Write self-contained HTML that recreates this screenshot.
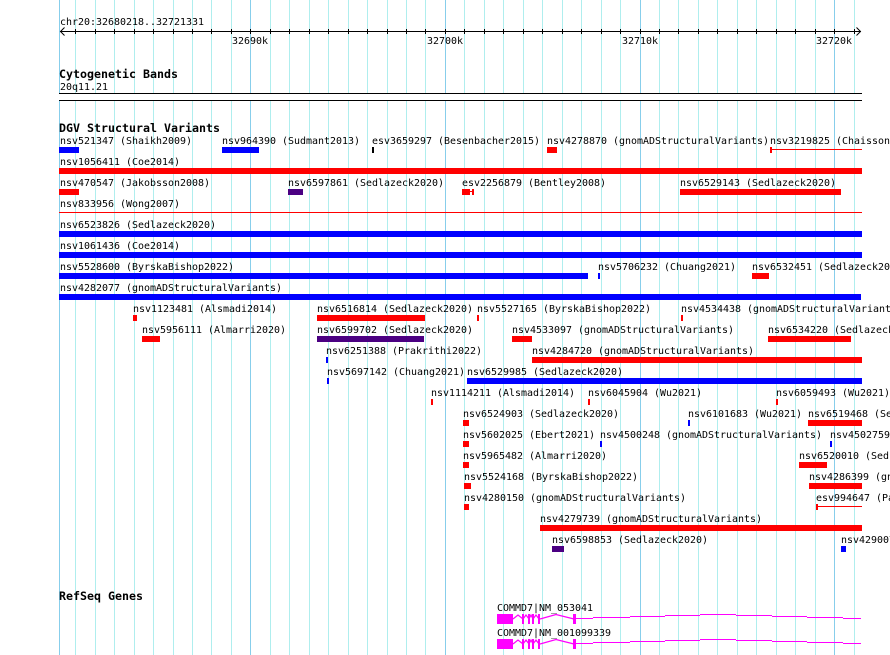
<!DOCTYPE html>
<html><head><meta charset="utf-8"><style>
html,body{margin:0;padding:0;background:#fff;overflow:hidden}
svg{display:block}
text{font-family:"DejaVu Sans Mono","Liberation Mono",monospace;font-size:9.97px;fill:#000;white-space:pre}
text.b{font-weight:bold;font-size:11.63px}
.r{fill:#f00}.u{fill:#00f}.p{fill:#4b0082}.m{fill:#f0f}
</style></head><body>
<svg width="890" height="655" viewBox="0 0 890 655" xmlns="http://www.w3.org/2000/svg">
<g shape-rendering="crispEdges">
<path stroke="#afeeee" stroke-width="1" fill="none" d="M75.5 0V655M95.5 0V655M114.5 0V655M134.5 0V655M153.5 0V655M173.5 0V655M192.5 0V655M211.5 0V655M231.5 0V655M270.5 0V655M289.5 0V655M309.5 0V655M328.5 0V655M348.5 0V655M367.5 0V655M387.5 0V655M406.5 0V655M425.5 0V655M464.5 0V655M484.5 0V655M503.5 0V655M523.5 0V655M542.5 0V655M562.5 0V655M581.5 0V655M601.5 0V655M620.5 0V655M659.5 0V655M678.5 0V655M698.5 0V655M717.5 0V655M737.5 0V655M756.5 0V655M776.5 0V655M795.5 0V655M815.5 0V655M854.5 0V655"/>
<path stroke="#87ceeb" stroke-width="1" fill="none" d="M59.5 0V655M250.5 0V655M445.5 0V655M640.5 0V655M834.5 0V655"/>
<rect x="0" y="93" width="890" height="8" fill="#fff"/>
<rect x="59" y="93" width="803" height="1" fill="#000"/>
<rect x="59" y="100" width="803" height="1" fill="#000"/>
<rect x="60" y="31" width="801" height="1" fill="#000"/>
<path stroke="#000" stroke-width="1" fill="none" d="M75.5 29V34M95.5 29V34M114.5 29V34M134.5 29V34M153.5 29V34M173.5 29V34M192.5 29V34M211.5 29V34M231.5 29V34M250.5 29V34M270.5 29V34M289.5 29V34M309.5 29V34M328.5 29V34M348.5 29V34M367.5 29V34M387.5 29V34M406.5 29V34M425.5 29V34M445.5 29V34M464.5 29V34M484.5 29V34M503.5 29V34M523.5 29V34M542.5 29V34M562.5 29V34M581.5 29V34M601.5 29V34M620.5 29V34M640.5 29V34M659.5 29V34M678.5 29V34M698.5 29V34M717.5 29V34M737.5 29V34M756.5 29V34M776.5 29V34M795.5 29V34M815.5 29V34M834.5 29V34M854.5 29V34"/>
</g>
<path stroke="#000" stroke-width="1" fill="none" d="M64.5 27.5L60.5 31.5L64.5 35.5M856.5 27.5L860.5 31.5L856.5 35.5"/>

<g shape-rendering="crispEdges">
<rect class="u" x="59" y="147" width="20" height="6"/>
<rect class="u" x="222" y="147" width="37" height="6"/>
<rect x="372" y="147" width="2" height="6" fill="#000"/>
<rect class="r" x="547" y="147" width="10" height="6"/>
<rect class="r" x="770" y="147" width="2" height="6"/>
<rect class="r" x="770" y="149" width="92" height="1"/>
<rect class="r" x="59" y="168" width="803" height="6"/>
<rect class="r" x="59" y="189" width="20" height="6"/>
<rect class="p" x="288" y="189" width="15" height="6"/>
<rect class="r" x="462" y="189" width="8" height="6"/>
<rect class="r" x="470" y="191" width="3" height="1"/>
<rect class="r" x="472" y="189" width="2" height="6"/>
<rect class="r" x="680" y="189" width="161" height="6"/>
<rect class="r" x="59" y="212" width="803" height="1"/>
<rect class="u" x="59" y="231" width="803" height="6"/>
<rect class="u" x="59" y="252" width="803" height="6"/>
<rect class="u" x="59" y="273" width="529" height="6"/>
<rect class="u" x="598" y="273" width="2" height="6"/>
<rect class="r" x="752" y="273" width="17" height="6"/>
<rect class="u" x="59" y="294" width="802" height="6"/>
<rect class="r" x="133" y="315" width="4" height="6"/>
<rect class="r" x="317" y="315" width="108" height="6"/>
<rect class="r" x="477" y="315" width="2" height="6"/>
<rect class="r" x="681" y="315" width="2" height="6"/>
<rect class="r" x="142" y="336" width="18" height="6"/>
<rect class="p" x="317" y="336" width="107" height="6"/>
<rect class="r" x="512" y="336" width="20" height="6"/>
<rect class="r" x="768" y="336" width="83" height="6"/>
<rect class="u" x="326" y="357" width="2" height="6"/>
<rect class="r" x="532" y="357" width="330" height="6"/>
<rect class="u" x="327" y="378" width="2" height="6"/>
<rect class="u" x="467" y="378" width="395" height="6"/>
<rect class="r" x="431" y="399" width="2" height="6"/>
<rect class="r" x="588" y="399" width="2" height="6"/>
<rect class="r" x="776" y="399" width="2" height="6"/>
<rect class="r" x="463" y="420" width="6" height="6"/>
<rect class="u" x="688" y="420" width="2" height="6"/>
<rect class="r" x="808" y="420" width="54" height="6"/>
<rect class="r" x="463" y="441" width="6" height="6"/>
<rect class="u" x="600" y="441" width="2" height="6"/>
<rect class="u" x="830" y="441" width="2" height="6"/>
<rect class="r" x="463" y="462" width="6" height="6"/>
<rect class="r" x="799" y="462" width="28" height="6"/>
<rect class="r" x="464" y="483" width="7" height="6"/>
<rect class="r" x="809" y="483" width="53" height="6"/>
<rect class="r" x="464" y="504" width="5" height="6"/>
<rect class="r" x="816" y="504" width="2" height="6"/>
<rect class="r" x="816" y="506" width="46" height="1"/>
<rect class="r" x="540" y="525" width="322" height="6"/>
<rect class="p" x="552" y="546" width="12" height="6"/>
<rect class="u" x="841" y="546" width="5" height="6"/>

<g class="m">
<rect x="497" y="614" width="16" height="10"/>
<rect x="522" y="614" width="2" height="10"/><rect x="528" y="614" width="2" height="10"/><rect x="532" y="614" width="2" height="10"/><rect x="538" y="614" width="2" height="10"/>
<rect x="573" y="614" width="3" height="10"/>
<rect x="576" y="618" width="17" height="1"/><rect x="593" y="617" width="37" height="1"/><rect x="630" y="616" width="35" height="1"/><rect x="665" y="615" width="35" height="1"/><rect x="700" y="614" width="36" height="1"/><rect x="736" y="615" width="36" height="1"/><rect x="772" y="616" width="35" height="1"/><rect x="807" y="617" width="36" height="1"/><rect x="843" y="618" width="18" height="1"/>
<rect x="497" y="639" width="16" height="10"/>
<rect x="522" y="639" width="2" height="10"/><rect x="528" y="639" width="2" height="10"/><rect x="532" y="639" width="2" height="10"/><rect x="538" y="639" width="2" height="10"/>
<rect x="573" y="639" width="3" height="10"/>
<rect x="576" y="643" width="17" height="1"/><rect x="593" y="642" width="37" height="1"/><rect x="630" y="641" width="35" height="1"/><rect x="665" y="640" width="35" height="1"/><rect x="700" y="639" width="36" height="1"/><rect x="736" y="640" width="36" height="1"/><rect x="772" y="641" width="35" height="1"/><rect x="807" y="642" width="36" height="1"/><rect x="843" y="643" width="18" height="1"/>
</g>
</g>
<path stroke="#f0f" stroke-width="1.2" fill="none" d="M513 619L518 615L523 619L526 615L529 619L531 615L533 619L536 615L539 619M540 619L556 614.5L574 619M513 644L518 640L523 644L526 640L529 644L531 640L533 644L536 640L539 644M540 644L556 639.5L574 644"/>

<text x="60" y="25">chr20:32680218..32721331</text>
<text x="232" y="44">32690k</text><text x="427" y="44">32700k</text><text x="622" y="44">32710k</text><text x="816" y="44">32720k</text>
<text class="b" x="59" y="78">Cytogenetic Bands</text>
<text x="60" y="90">20q11.21</text>
<text class="b" x="59" y="132">DGV Structural Variants</text>

<text x="60" y="144">nsv521347 (Shaikh2009)</text>
<text x="222" y="144">nsv964390 (Sudmant2013)</text>
<text x="372" y="144">esv3659297 (Besenbacher2015)</text>
<text x="547" y="144">nsv4278870 (gnomADStructuralVariants)</text>
<text x="770" y="144">nsv3219825 (Chaisson</text>
<text x="60" y="165">nsv1056411 (Coe2014)</text>
<text x="60" y="186">nsv470547 (Jakobsson2008)</text>
<text x="288" y="186">nsv6597861 (Sedlazeck2020)</text>
<text x="462" y="186">esv2256879 (Bentley2008)</text>
<text x="680" y="186">nsv6529143 (Sedlazeck2020)</text>
<text x="60" y="207">nsv833956 (Wong2007)</text>
<text x="60" y="228">nsv6523826 (Sedlazeck2020)</text>
<text x="60" y="249">nsv1061436 (Coe2014)</text>
<text x="60" y="270">nsv5528600 (ByrskaBishop2022)</text>
<text x="598" y="270">nsv5706232 (Chuang2021)</text>
<text x="752" y="270">nsv6532451 (Sedlazeck20</text>
<text x="60" y="291">nsv4282077 (gnomADStructuralVariants)</text>
<text x="133" y="312">nsv1123481 (Alsmadi2014)</text>
<text x="317" y="312">nsv6516814 (Sedlazeck2020)</text>
<text x="477" y="312">nsv5527165 (ByrskaBishop2022)</text>
<text x="681" y="312">nsv4534438 (gnomADStructuralVariants</text>
<text x="142" y="333">nsv5956111 (Almarri2020)</text>
<text x="317" y="333">nsv6599702 (Sedlazeck2020)</text>
<text x="512" y="333">nsv4533097 (gnomADStructuralVariants)</text>
<text x="768" y="333">nsv6534220 (Sedlazeck</text>
<text x="326" y="354">nsv6251388 (Prakrithi2022)</text>
<text x="532" y="354">nsv4284720 (gnomADStructuralVariants)</text>
<text x="327" y="375">nsv5697142 (Chuang2021)</text>
<text x="467" y="375">nsv6529985 (Sedlazeck2020)</text>
<text x="431" y="396">nsv1114211 (Alsmadi2014)</text>
<text x="588" y="396">nsv6045904 (Wu2021)</text>
<text x="776" y="396">nsv6059493 (Wu2021)</text>
<text x="463" y="417">nsv6524903 (Sedlazeck2020)</text>
<text x="688" y="417">nsv6101683 (Wu2021)</text>
<text x="808" y="417">nsv6519468 (Sed</text>
<text x="463" y="438">nsv5602025 (Ebert2021)</text>
<text x="600" y="438">nsv4500248 (gnomADStructuralVariants)</text>
<text x="830" y="438">nsv4502759</text>
<text x="463" y="459">nsv5965482 (Almarri2020)</text>
<text x="799" y="459">nsv6520010 (Sed</text>
<text x="464" y="480">nsv5524168 (ByrskaBishop2022)</text>
<text x="809" y="480">nsv4286399 (gnomAD</text>
<text x="464" y="501">nsv4280150 (gnomADStructuralVariants)</text>
<text x="816" y="501">esv994647 (Pa</text>
<text x="540" y="522">nsv4279739 (gnomADStructuralVariants)</text>
<text x="552" y="543">nsv6598853 (Sedlazeck2020)</text>
<text x="841" y="543">nsv4290077</text>

<text class="b" x="59" y="600">RefSeq Genes</text>
<text x="497" y="611">COMMD7|NM_053041</text>
<text x="497" y="636">COMMD7|NM_001099339</text>
</svg>
</body></html>
